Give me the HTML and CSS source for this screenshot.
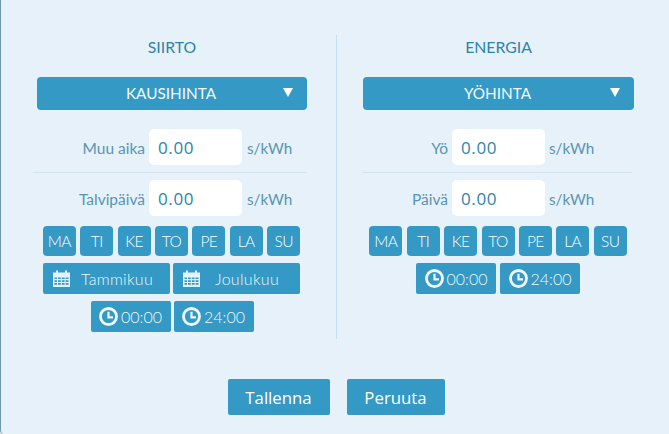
FILE: index.html
```html
<!DOCTYPE html>
<html lang="fi">
<head>
<meta charset="utf-8">
<title>Hinnat</title>
<link rel="stylesheet" href="styles.css">
</head>
<body>
<svg class="defs" width="0" height="0" aria-hidden="true">
  <symbol id="clock" viewBox="0 0 19 19">
    <circle cx="9.500" cy="9.500" r="8" fill="none" stroke="currentColor" stroke-width="2.800"/>
    <path d="M9.500 4.800V10.300H14" fill="none" stroke="currentColor" stroke-width="2.200"/>
  </symbol>
  <symbol id="cal" viewBox="0 0 17 17">
    <path fill="currentColor" fill-rule="evenodd" d="M0 2.500h3V0.500h2v2h7V0.500h2v2h3V17H0zM1.500 7.500v1.600h2.500V7.500zM5 7.500v1.600h2.800V7.500zM8.800 7.500v1.600h2.800V7.500zM12.600 7.500v1.600h2.900V7.500zM1.500 10.300v1.600h2.500v-1.600zM5 10.300v1.600h2.800v-1.600zM8.800 10.300v1.600h2.800v-1.600zM12.600 10.300v1.600h2.900v-1.600zM1.500 13.100v1.600h2.500v-1.600zM5 13.100v1.600h2.800v-1.600zM8.800 13.100v1.600h2.800v-1.600zM12.600 13.100v1.600h2.900v-1.600z"/>
  </symbol>
</svg>
<main class="dialog">
  <div class="columns">
    <section class="col col-left">
      <h2 class="title">SIIRTO</h2>
      <div class="select"><span class="select-label">KAUSIHINTA</span><span class="arrow"></span></div>
      <div class="field first"><label class="label">Muu aika</label><span class="input">0.00</span><span class="unit">s/kWh</span></div>
      <div class="rule"></div>
      <div class="field"><label class="label">Talvipäivä</label><span class="input">0.00</span><span class="unit">s/kWh</span></div>
      <div class="days"><span class="day">MA</span><span class="day">TI</span><span class="day">KE</span><span class="day">TO</span><span class="day">PE</span><span class="day">LA</span><span class="day">SU</span></div>
      <div class="months">
        <span class="month"><svg class="ico-cal"><use href="#cal"/></svg><span class="month-text">Tammikuu</span></span>
        <span class="month"><svg class="ico-cal"><use href="#cal"/></svg><span class="month-text">Joulukuu</span></span>
      </div>
      <div class="times">
        <span class="time"><svg class="ico-clock"><use href="#clock"/></svg>00:00</span>
        <span class="time"><svg class="ico-clock"><use href="#clock"/></svg>24:00</span>
      </div>
    </section>
    <div class="divider"></div>
    <section class="col col-right">
      <h2 class="title">ENERGIA</h2>
      <div class="select"><span class="select-label">YÖHINTA</span><span class="arrow"></span></div>
      <div class="field first"><label class="label short">Yö</label><span class="input">0.00</span><span class="unit">s/kWh</span></div>
      <div class="rule"></div>
      <div class="field"><label class="label short">Päivä</label><span class="input">0.00</span><span class="unit">s/kWh</span></div>
      <div class="days"><span class="day">MA</span><span class="day">TI</span><span class="day">KE</span><span class="day">TO</span><span class="day">PE</span><span class="day">LA</span><span class="day">SU</span></div>
      <div class="times">
        <span class="time"><svg class="ico-clock"><use href="#clock"/></svg>00:00</span>
        <span class="time"><svg class="ico-clock"><use href="#clock"/></svg>24:00</span>
      </div>
    </section>
  </div>
  <div class="actions">
    <button class="action save">Tallenna</button>
    <button class="action cancel">Peruuta</button>
  </div>
</main>
</body>
</html>
```
FILE: styles.css
```css
* { box-sizing: border-box; }
html, body { margin: 0; height: 100%; }
body {
  width: 669px;
  height: 434px;
  overflow: hidden;
  background: #e6f1f9;
  font-family: "Lato", "Liberation Sans", sans-serif;
  color: #3a87ab;
}
.defs { display: block; height: 0; }
.dialog {
  width: 669px;
  height: 434px;
  padding-top: 35px;
  border-left: 1px solid #6d97ad;
  border-bottom-left-radius: 4px;
}
.columns { display: flex; height: 304px; padding-left: 36px; }
.col { width: 271px; display: flex; flex-direction: column; align-items: center; }
.col-left { width: 270px; }
.divider { width: 1px; margin: 0 26px 0 29px; background: #c3dff3; }
.title {
  margin: 3px 0 0;
  height: 18px;
  line-height: 18px;
  font-size: 15.800px;
  font-weight: 400;
  color: #2f83a9;
}
.select {
  margin-top: 21px;
  width: 270px;
  height: 33px;
  padding-bottom: 1px;
  flex: none;
  display: flex;
  align-items: center;
  justify-content: center;
  position: relative;
  background: #3499c4;
  border-radius: 4px;
  color: #f2f9fc;
  font-size: 15.300px;
}
.col-left .select { align-self: flex-start; }
.col-right .select { align-self: flex-start; width: 271px; }
.select-label { margin-right: 2px; }
.arrow {
  position: absolute;
  right: 14px;
  top: 11px;
  border-left: 5.500px solid transparent;
  border-right: 5.500px solid transparent;
  border-top: 9px solid #fff;
}
.field {
  align-self: flex-start;
  display: flex;
  align-items: center;
  height: 36px;
  font-size: 15.500px;
}
.field.first { margin-top: 19px; }
.label { width: 112px; padding: 1px 4px 0 0; text-align: right; color: #5a94b2; white-space: nowrap; }
.label.short { width: 79px; }
.col-right .field { padding-left: 10px; }
.input {
  width: 93px;
  height: 36px;
  line-height: 37px;
  padding-left: 9px;
  background: #fff;
  border-radius: 5px;
  color: #2f83a9;
  font-family: "Open Sans", sans-serif;
  font-size: 17px;
  letter-spacing: 0.6px;
}
.unit { margin-left: 5px; padding-top: 1px; color: #5a94b2; font-size: 15.300px; }
.col-right .unit { margin-left: 4px; }
.rule { align-self: flex-start; width: 273px; height: 1px; margin: 7px 0 7px -4px; background: #d3e4ef; }
.col-right .rule { width: 270px; margin-left: -1px; }
.days { display: flex; gap: 4.400px; margin-top: 10px; margin-right: 1px; }
.day {
  width: 33px;
  height: 30px;
  display: flex;
  align-items: center;
  justify-content: center;
  background: #3499c4;
  border-radius: 4px;
  color: #fff;
  font-size: 15.500px;
  font-weight: 300;
  letter-spacing: -0.5px;
}
.months { display: flex; gap: 3px; margin-top: 7px; margin-right: 1px; }
.month {
  width: 127px;
  height: 31px;
  display: flex;
  align-items: center;
  padding-left: 10px;
  background: #3499c4;
  border-radius: 2px;
  color: #eef8fc;
  font-size: 16px;
}
.ico-cal { width: 17px; height: 17px; flex: none; color: #e4f3fa; }
.month-text { flex: 1; text-align: center; padding-right: 6px; letter-spacing: 0.3px; font-weight: 300; }
.times { display: flex; gap: 3px; margin-top: 7px; }
.col-right .times { gap: 4px; margin-right: 1px; }
.time {
  width: 80px;
  height: 31px;
  display: flex;
  align-items: center;
  justify-content: center;
  gap: 3px;
  background: #3499c4;
  border-radius: 2px;
  color: #eef8fc;
  font-size: 16px;
  font-weight: 300;
}
.ico-clock { width: 19px; height: 19px; flex: none; color: #f0f8fc; }
.actions { display: flex; justify-content: center; gap: 17px; margin-top: 40px; padding-left: 2px; }
.action {
  height: 36px;
  border: 0;
  border-radius: 2px;
  padding: 0;
  background: #3499c4;
  color: #fff;
  font-family: "Open Sans", sans-serif;
  font-size: 16.800px;
}
.save { width: 102px; }
.cancel { width: 98px; }
```
